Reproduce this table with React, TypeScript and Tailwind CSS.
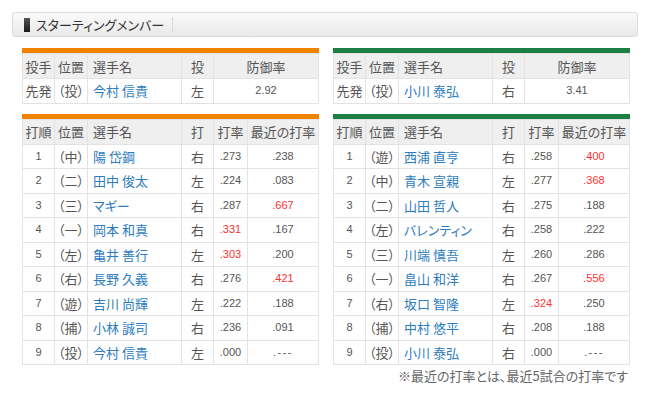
import React from 'react';

type Batter = {
  order: number;
  pos: string;
  name: string;
  hand: string;
  avg: string;
  recent: string;
  avgHot?: boolean;
  recentHot?: boolean;
};

type Team = {
  color: string;
  pitcher: { pos: string; name: string; hand: string; era: string };
  batters: Batter[];
};

const giants: Team = {
  color: 'bg-[#f08300]',
  pitcher: { pos: '（投）', name: '今村 信貴', hand: '左', era: '2.92' },
  batters: [
    { order: 1, pos: '（中）', name: '陽 岱鋼', hand: '右', avg: '.273', recent: '.238' },
    { order: 2, pos: '（二）', name: '田中 俊太', hand: '左', avg: '.224', recent: '.083' },
    { order: 3, pos: '（三）', name: 'マギー', hand: '右', avg: '.287', recent: '.667', recentHot: true },
    { order: 4, pos: '（一）', name: '岡本 和真', hand: '右', avg: '.331', recent: '.167', avgHot: true },
    { order: 5, pos: '（左）', name: '亀井 善行', hand: '左', avg: '.303', recent: '.200', avgHot: true },
    { order: 6, pos: '（右）', name: '長野 久義', hand: '右', avg: '.276', recent: '.421', recentHot: true },
    { order: 7, pos: '（遊）', name: '吉川 尚輝', hand: '左', avg: '.222', recent: '.188' },
    { order: 8, pos: '（捕）', name: '小林 誠司', hand: '右', avg: '.236', recent: '.091' },
    { order: 9, pos: '（投）', name: '今村 信貴', hand: '左', avg: '.000', recent: '.---' },
  ],
};

const swallows: Team = {
  color: 'bg-[#1b7f44]',
  pitcher: { pos: '（投）', name: '小川 泰弘', hand: '右', era: '3.41' },
  batters: [
    { order: 1, pos: '（遊）', name: '西浦 直亨', hand: '右', avg: '.258', recent: '.400', recentHot: true },
    { order: 2, pos: '（中）', name: '青木 宣親', hand: '左', avg: '.277', recent: '.368', recentHot: true },
    { order: 3, pos: '（二）', name: '山田 哲人', hand: '右', avg: '.275', recent: '.188' },
    { order: 4, pos: '（左）', name: 'バレンティン', hand: '右', avg: '.258', recent: '.222' },
    { order: 5, pos: '（三）', name: '川端 慎吾', hand: '左', avg: '.260', recent: '.286' },
    { order: 6, pos: '（一）', name: '畠山 和洋', hand: '右', avg: '.267', recent: '.556', recentHot: true },
    { order: 7, pos: '（右）', name: '坂口 智隆', hand: '左', avg: '.324', recent: '.250', avgHot: true },
    { order: 8, pos: '（捕）', name: '中村 悠平', hand: '右', avg: '.208', recent: '.188' },
    { order: 9, pos: '（投）', name: '小川 泰弘', hand: '右', avg: '.000', recent: '.---' },
  ],
};

const jp = "font-['Noto_Sans_CJK_JP',sans-serif] [font-feature-settings:'palt'] text-[13px]";
const num = "font-['Liberation_Sans',Arial,sans-serif] text-[11px]";
const th = `border border-[#e3e3e3] bg-[#efefef] text-[#555] font-normal p-0 ${jp}`;
const td = 'border border-[#e3e3e3] p-0';
const gray = 'text-[#555]';
const link = 'text-[#2d7cc0]';
const hot = 'text-[#ff3030]';

const Cols = () => (
  <colgroup>
    <col className="w-[32px]" />
    <col className="w-[33px]" />
    <col className="w-[94px]" />
    <col className="w-[32px]" />
    <col className="w-[34px]" />
    <col className="w-[71px]" />
  </colgroup>
);

const PitcherTable = ({ team }: { team: Team }) => (
  <div className="w-[297px]">
    <div className={`h-[5px] ${team.color}`} />
    <table className="w-full table-fixed border-collapse bg-white leading-none">
      <Cols />
      <thead>
        <tr className="h-[25px]">
          <th className={th}>投手</th>
          <th className={th}>位置</th>
          <th className={`${th} text-left pl-[5px]`}>選手名</th>
          <th className={th}>投</th>
          <th className={th} colSpan={2}>防御率</th>
        </tr>
      </thead>
      <tbody>
        <tr className="h-[24.5px] text-center">
          <td className={`${td} ${jp} ${gray}`}>先発</td>
          <td className={`${td} ${jp} ${gray}`}>{team.pitcher.pos}</td>
          <td className={`${td} ${jp} ${link} text-left pl-[5px]`}>{team.pitcher.name}</td>
          <td className={`${td} ${jp} ${gray}`}>{team.pitcher.hand}</td>
          <td className={`${td} ${num} ${gray}`} colSpan={2}>{team.pitcher.era}</td>
        </tr>
      </tbody>
    </table>
  </div>
);

const Stat = ({ value }: { value: string }) =>
  value === '.---' ? <span className="tracking-[1.5px]">{value}</span> : <>{value}</>;

const LineupTable = ({ team }: { team: Team }) => (
  <div className="w-[297px]">
    <div className={`h-[5px] ${team.color}`} />
    <table className="w-full table-fixed border-collapse bg-white leading-none">
      <Cols />
      <thead>
        <tr className="h-[25px]">
          <th className={th}>打順</th>
          <th className={th}>位置</th>
          <th className={`${th} text-left pl-[5px]`}>選手名</th>
          <th className={th}>打</th>
          <th className={th}>打率</th>
          <th className={`${th} whitespace-nowrap`}>最近の打率</th>
        </tr>
      </thead>
      <tbody>
        {team.batters.map((b) => (
          <tr key={b.order} className="h-[24.5px] text-center">
            <td className={`${td} ${num} ${gray}`}>{b.order}</td>
            <td className={`${td} ${jp} ${gray}`}>{b.pos}</td>
            <td className={`${td} ${jp} ${link} text-left pl-[5px]`}>{b.name}</td>
            <td className={`${td} ${jp} ${gray}`}>{b.hand}</td>
            <td className={`${td} ${num} ${b.avgHot ? hot : gray}`}>{b.avg}</td>
            <td className={`${td} ${num} ${b.recentHot ? hot : gray}`}>
              <Stat value={b.recent} />
            </td>
          </tr>
        ))}
      </tbody>
    </table>
  </div>
);

export default function App() {
  return (
    <div className="min-h-[394px] w-[650px] bg-white pt-[12px] pl-[12px]">
      {/* section heading */}
      <div className="flex h-[25px] w-[626px] items-center rounded-[3px] border border-[#dcdcdc] bg-gradient-to-b from-[#fbfbfb] via-[#f1f1f1] to-[#e9e9e9] pl-[11px]">
        <span className="h-[14px] w-[6px] bg-gradient-to-b from-[#555] to-[#1a1a1a]" />
        <h2 className="ml-[6px] font-['Noto_Sans_CJK_JP',sans-serif] [font-feature-settings:'palt'] text-[13px] leading-none text-[#333]">
          スターティングメンバー
        </h2>
        <span className="ml-[8px] h-[14px] border-l border-dotted border-[#c8c8c8]" />
      </div>

      <div className="mt-[11px] flex gap-[14px] pl-[10px]">
        <PitcherTable team={giants} />
        <PitcherTable team={swallows} />
      </div>

      <div className="mt-[10px] flex gap-[14px] pl-[10px]">
        <LineupTable team={giants} />
        <LineupTable team={swallows} />
      </div>

      <p className={`mt-[4px] w-[616px] text-right leading-none text-[#666] ${jp}`}>
        ※最近の打率とは、最近5試合の打率です
      </p>
    </div>
  );
}
